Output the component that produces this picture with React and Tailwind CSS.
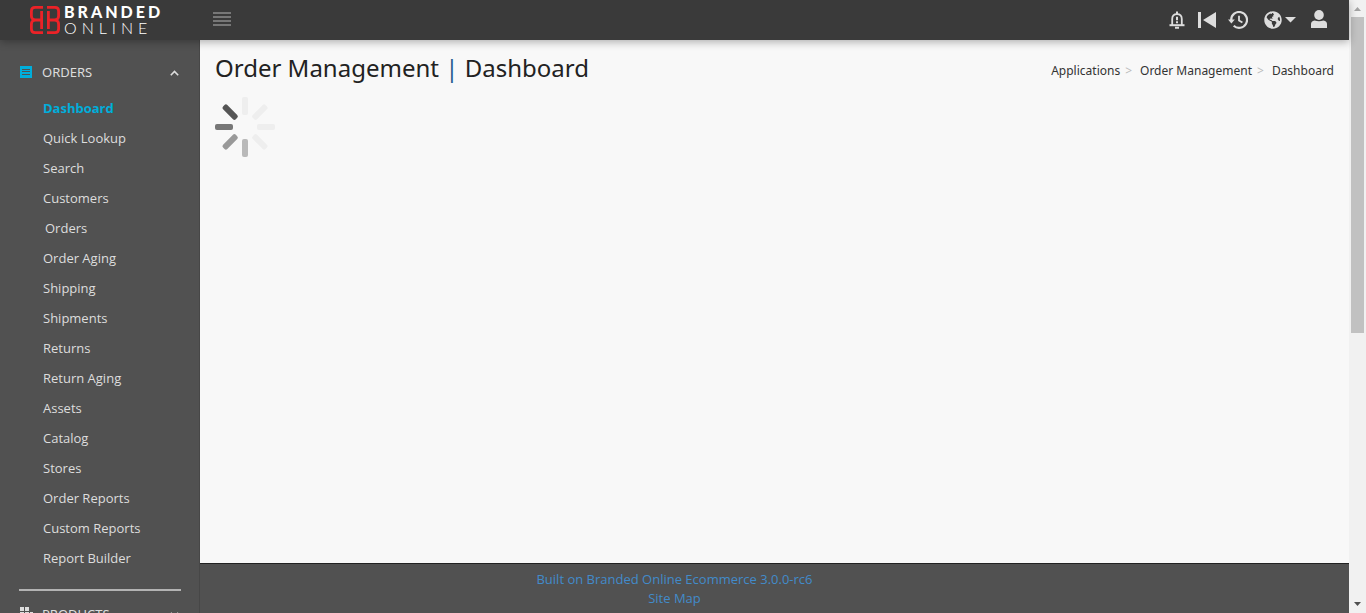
import React from "react";
import { FaGlobeAmericas } from "react-icons/fa";

const orderLinks = [
  "Dashboard",
  "Quick Lookup",
  "Search",
  "Customers",
  "Orders",
  "Order Aging",
  "Shipping",
  "Shipments",
  "Returns",
  "Return Aging",
  "Assets",
  "Catalog",
  "Stores",
  "Order Reports",
  "Custom Reports",
  "Report Builder",
];

const spokes = [
  { angle: 0, color: "#eeeeee" },
  { angle: 45, color: "#eeeeee" },
  { angle: 90, color: "#eeeeee" },
  { angle: 135, color: "#eeeeee" },
  { angle: 180, color: "#b9b9b9" },
  { angle: 225, color: "#999999" },
  { angle: 270, color: "#777777" },
  { angle: 315, color: "#555555" },
];

function LogoMark() {
  return (
    <svg viewBox="0 0 30 28" className="h-7 w-[30px]" fill="none" stroke="#ec2227" strokeWidth="2.8" aria-hidden="true">
      <path d="M13 1.4H5Q1.4 1.4 1.4 5V10Q1.4 13 4.4 14Q1.4 15 1.4 18V23Q1.4 26.6 5 26.6H13" />
      <path d="M11.6 5V23M4 14H11.6" />
      <path d="M17 1.4H25Q28.6 1.4 28.6 5V10Q28.6 13 25.6 14Q28.6 15 28.6 18V23Q28.6 26.6 25 26.6H17" />
      <path d="M18.4 5V23M26 14H18.4" />
    </svg>
  );
}

function Spinner() {
  return (
    <svg viewBox="0 0 60 60" className="size-[60px]" role="img" aria-label="Loading">
      {spokes.map((s) => (
        <rect key={s.angle} x="27" y="0" width="6" height="18" rx="2" fill={s.color} transform={`rotate(${s.angle} 30 30)`} />
      ))}
    </svg>
  );
}

function Chevron({ down }) {
  return (
    <svg viewBox="0 0 9 6" className="h-[6px] w-[9px]" fill="none" stroke="#dddddd" strokeWidth="1.6" aria-hidden="true">
      <path d={down ? "M.8 .8L4.5 4.5L8.2 .8" : "M.8 5.2L4.5 1.5L8.2 5.2"} />
    </svg>
  );
}

function Header() {
  return (
    <header className="relative z-10 flex h-10 shrink-0 items-center bg-[#3a3a3a] text-[#dddddd] shadow-[0_2px_8px_rgba(0,0,0,0.3)]">
      <div className="flex w-[200px] shrink-0 items-center pl-[30px]">
        <a href="#home" className="flex items-center gap-1" aria-label="Branded Online">
          <LogoMark />
          <span className="flex flex-col font-[Lato,sans-serif] text-[16px] leading-[16px] text-white">
            <span className="font-black tracking-[3px]">BRANDED</span>
            <span className="font-light tracking-[5px]">ONLINE</span>
          </span>
        </a>
      </div>
      <button type="button" aria-label="Toggle menu" className="ml-[13px] pb-[2px]">
        <svg viewBox="0 0 18 14" className="h-[14px] w-[18px]" fill="#777777">
          <path d="M0 0H18V2H0zM0 4H18V6H0zM0 8H18V10H0zM0 12H18V14H0z" />
        </svg>
      </button>
      <div className="ml-auto flex items-center pr-[22px]">
        <button type="button" aria-label="Alerts">
          <svg viewBox="0 0 16 18" className="h-[18px] w-4" fill="none" stroke="currentColor">
            <path d="M3.2 14V8Q3.2 3.2 8 3.2Q12.8 3.2 12.8 8V14" strokeWidth="1.8" />
            <path d="M.5 14.2H15.5" strokeWidth="2" />
            <path d="M8 .4V3M8 5.8V9.2M8 10.2V12.2M6 16.8H10" strokeWidth="2" />
          </svg>
        </button>
        <button type="button" aria-label="Previous" className="ml-[13px]">
          <svg viewBox="0 0 18 16" className="h-4 w-[18px]" fill="currentColor">
            <path d="M0 0H3V16H0zM18 0V16L5 8z" />
          </svg>
        </button>
        <button type="button" aria-label="History" className="ml-3">
          <svg viewBox="0 0 20 18" className="h-[18px] w-5" fill="none" stroke="currentColor" strokeWidth="2.2">
            <path d="M3.2 9A7.9 7.9 0 1 1 5.7 14.7" />
            <path d="M0 8.6H6.8L3.4 12.4z" fill="currentColor" stroke="none" />
            <path d="M11 4.8V9.4L14.4 11.6" strokeWidth="1.8" />
          </svg>
        </button>
        <button type="button" aria-label="Language" className="ml-4 flex items-center gap-[3px]">
          <FaGlobeAmericas className="size-[18px]" />
          <svg viewBox="0 0 11 6" className="h-[6px] w-[11px]" fill="currentColor">
            <path d="M0 0H11L5.5 5.5z" />
          </svg>
        </button>
        <button type="button" aria-label="Account" className="ml-[15px] pb-[2px]">
          <svg viewBox="0 0 16 18" className="h-[18px] w-4" fill="currentColor">
            <ellipse cx="8" cy="5" rx="4.8" ry="5" />
            <path d="M0 18V14Q0 11.3 3.5 10.5Q8 12 12.5 10.5Q16 11.3 16 14V18z" />
          </svg>
        </button>
      </div>
    </header>
  );
}

function Sidebar() {
  return (
    <aside className="w-[200px] shrink-0 overflow-hidden border-r border-[#474747] bg-[#515151] pl-[19px] pr-[18px] pt-[18px] text-[13px] text-[#dddddd]">
      <button type="button" aria-expanded="true" className="flex h-[30px] w-full items-center pr-[2px]">
        <svg viewBox="0 0 12 12" className="mb-[2px] ml-px size-3" aria-hidden="true">
          <path fill="#00aedb" d="M0 0H12V12H0z" />
          <path fill="#515151" d="M2 3H10V4H2zM2 5H10V6H2zM2 8H10V9H2z" />
        </svg>
        <span className="ml-[10px] mr-auto">ORDERS</span>
        <Chevron />
      </button>
      <nav aria-label="Orders" className="mt-[6px]">
        <ul className="pl-6 font-['Open_Sans',sans-serif] font-medium">
          {orderLinks.map((label, i) => (
            <li key={label}>
              <a
                href="#orders"
                className={`flex h-[30px] items-center ${i === 0 ? "font-bold text-[#00aedb]" : ""} ${label === "Orders" ? "pl-[2px]" : ""}`}
              >
                {label}
              </a>
            </li>
          ))}
        </ul>
      </nav>
      <hr className="mb-[9px] mt-[15px] border-t-2 border-[#b3b3b3]" />
      <button type="button" aria-expanded="false" className="flex h-[30px] w-full items-center pr-[2px]">
        <svg viewBox="0 0 13 13" className="mb-1 ml-px size-[13px]" fill="#dddddd" aria-hidden="true">
          <path d="M0 0H4V4H0zM5 0H9V4H5zM0 5H4V9H0zM5 5H9V9H5zM10 5H13V9H10zM0 10H4V13H0zM5 10H9V13H5zM10 10H13V13H10z" />
        </svg>
        <span className="ml-[9px] mr-auto">PRODUCTS</span>
        <Chevron down />
      </button>
    </aside>
  );
}

function Scrollbar() {
  return (
    <div className="flex w-[17px] shrink-0 flex-col items-center bg-[#f1f1f1]" aria-hidden="true">
      <svg viewBox="0 0 17 17" className="size-[17px] shrink-0" fill="#a3a3a3">
        <path d="M5 11L8.5 7L12 11z" />
      </svg>
      <div className="h-[316px] w-[13px] bg-[#c1c1c1]" />
      <svg viewBox="0 0 17 17" className="mt-auto size-[17px] shrink-0" fill="#505050">
        <path d="M5 6L8.5 10L12 6z" />
      </svg>
    </div>
  );
}

export default function App() {
  return (
    <div className="flex h-screen overflow-hidden font-['Noto_Sans',sans-serif]">
      <div className="flex min-w-0 flex-1 flex-col">
        <Header />
        <div className="flex min-h-0 flex-1">
          <Sidebar />
          <div className="flex min-w-0 flex-1 flex-col bg-[#f8f8f8]">
            <main className="flex-1 px-[15px] pt-3">
              <div className="flex items-center justify-between">
                <h1 className="text-2xl text-[#222222]">
                  Order Management <span className="text-[#28608f]">|</span> Dashboard
                </h1>
                <nav aria-label="Breadcrumb" className="pt-[6px] text-xs text-[#333333]">
                  <ol className="flex items-center">
                    <li><a href="#applications">Applications</a></li>
                    <li className="ml-[5px] mr-2 text-[#bbbbbb]" aria-hidden="true">&gt;</li>
                    <li><a href="#orders">Order Management</a></li>
                    <li className="ml-[5px] mr-2 text-[#bbbbbb]" aria-hidden="true">&gt;</li>
                    <li aria-current="page">Dashboard</li>
                  </ol>
                </nav>
              </div>
              <div className="mt-[13px]">
                <Spinner />
              </div>
            </main>
            <footer className="flex h-[50px] shrink-0 flex-col items-center border-t border-[#222222] bg-[#515151] pr-[200px] pt-[6px] font-['Open_Sans',sans-serif] text-[13px] leading-[19px] text-[#428bca]">
              <a href="#about">Built on Branded Online Ecommerce 3.0.0-rc6</a>
              <a href="#sitemap">Site Map</a>
            </footer>
          </div>
        </div>
      </div>
      <Scrollbar />
    </div>
  );
}
